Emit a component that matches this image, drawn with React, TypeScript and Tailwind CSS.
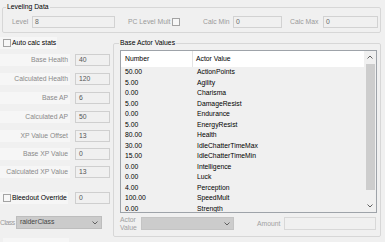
import React from "react";

const ROWS = [
  ["50.00", "ActionPoints"],
  ["5.00", "Agility"],
  ["0.00", "Charisma"],
  ["5.00", "DamageResist"],
  ["0.00", "Endurance"],
  ["5.00", "EnergyResist"],
  ["80.00", "Health"],
  ["30.00", "IdleChatterTimeMax"],
  ["15.00", "IdleChatterTimeMin"],
  ["0.00", "Intelligence"],
  ["0.00", "Luck"],
  ["4.00", "Perception"],
  ["100.00", "SpeedMult"],
  ["0.00", "Strength"],
];

function Check() {
  return <div className="w-[8px] h-[8px] border border-[#a3a3a3] bg-[#f7f7f7] shrink-0" />;
}

function Chevron({ up }: { up?: boolean }) {
  return (
    <svg width="6" height="4" viewBox="0 0 6 4" className="text-[#606060]">
      <path d={up ? "M0.5 3.5L3 1L5.5 3.5" : "M0.5 0.5L3 3L5.5 0.5"} fill="none" stroke="currentColor" strokeWidth="1" />
    </svg>
  );
}

function Field({ label, value, mt }: { label: string; value: string; mt: string }) {
  return (
    <div className={`flex h-[12px] ${mt}`}>
      <div className="w-[70px] h-full bg-[#f6f6f6] pr-[2px] text-right leading-[12px] text-[#8a8a8a] whitespace-nowrap">
        {label}
      </div>
      <div className="ml-[5px] w-[35px] h-full border border-[#cfcfcf] bg-[#f0f0f0] pl-[3px] leading-[10px] text-[#555]">
        {value}
      </div>
    </div>
  );
}

function SmallInput({ w, value }: { w: string; value?: string }) {
  return (
    <div className={`${w} h-[12px] border border-[#d2d2d2] bg-[#f0f0f0] pl-[2px] leading-[10px] text-[#666]`}>{value}</div>
  );
}

export default function App() {
  return (
    <div className="w-[385px] h-[242px] overflow-hidden bg-[#f0f0f0] font-['Liberation_Sans',Arial,sans-serif] text-[6.8px] text-black">
      {/* Leveling Data */}
      <fieldset className="ml-[2px] mr-[4px] mt-[2px] h-[31px] border border-[#d7d7d7] rounded-[2px] pl-[9px]">
        <legend className="ml-[-6px] px-[1px] leading-[10px]">Leveling Data</legend>
        <div className="flex items-center mt-[4px] h-[12px] text-[#9a9a9a]">
          <div className="w-[18px] whitespace-nowrap">Level</div>
          <div className="ml-[2px]">
            <SmallInput w="w-[83px]" value="8" />
          </div>
          <div className="ml-[13px] w-[42px] whitespace-nowrap">PC Level Mult</div>
          <div className="ml-[2px]">
            <Check />
          </div>
          <div className="ml-[23px] w-[28px] whitespace-nowrap">Calc Min</div>
          <div className="ml-[2px]">
            <SmallInput w="w-[49px]" value="0" />
          </div>
          <div className="ml-[8px] w-[32px] whitespace-nowrap">Calc Max</div>
          <div className="ml-[1px]">
            <SmallInput w="w-[55px]" value="0" />
          </div>
        </div>
      </fieldset>

      <div className="flex">
        {/* left column */}
        <div className="w-[113px] shrink-0 flex flex-col">
          <div className="mt-[4px] w-[57px] h-[12px] bg-[#f6f6f6] flex items-center pl-[3px] gap-[1px]">
            <Check />
            <span className="whitespace-nowrap">Auto calc stats</span>
          </div>
          <Field label="Base Health" value="40" mt="mt-[5px]" />
          <Field label="Calculated Health" value="120" mt="mt-[7px]" />
          <Field label="Base AP" value="6" mt="mt-[7px]" />
          <Field label="Calculated AP" value="50" mt="mt-[7px]" />
          <Field label="XP Value Offset" value="13" mt="mt-[7px]" />
          <Field label="Base XP Value" value="0" mt="mt-[6px]" />
          <Field label="Calculated XP Value" value="13" mt="mt-[6px]" />
          <div className="flex h-[12px] mt-[14px]">
            <div className="w-[68px] h-full bg-[#f6f6f6] flex items-center pl-[3px] gap-[1px]">
              <Check />
              <span className="whitespace-nowrap">Bleedout Override</span>
            </div>
            <div className="ml-[7px] w-[35px] h-full border border-[#cfcfcf] bg-[#f0f0f0] pl-[3px] leading-[10px] text-[#555]">
              0
            </div>
          </div>
          <div className="flex h-[13px] mt-[12px]">
            <div className="w-[15px] leading-[13px] text-[#9a9a9a] whitespace-nowrap tracking-[-0.45px]">Class</div>
            <div className="ml-[1px] w-[86px] h-full border border-[#bdbdbd] bg-[#cbcbcb] flex items-center justify-between pl-[3px] pr-[3px] text-[#444]">
              <span>raiderClass</span>
              <Chevron />
            </div>
          </div>
          <div className="mt-[9px] ml-[3px] w-[66px] h-[10px] bg-[#f6f6f6]" />
        </div>

        {/* Base Actor Values */}
        <fieldset className="mt-[5px] w-[268px] h-[199px] border border-[#d7d7d7] rounded-[2px] pl-[6px]">
          <legend className="ml-[-1px] px-[1px] leading-[10px]">Base Actor Values</legend>
          <div className="mt-[2px] w-[257px] h-[163px] border border-[#9ea3a9] flex overflow-hidden">
            <div className="flex-1 flex flex-col">
              <div className="h-[16px] bg-white flex shrink-0">
                <div className="w-[72px] pl-[4px] leading-[16px] border-r border-[#e3e3e3]">Number</div>
                <div className="pl-[3px] leading-[16px]">Actor Value</div>
              </div>
              <div className="flex flex-col">
                {ROWS.map(([num, name]) => (
                  <div key={name} className="flex h-[10.5px] leading-[10.5px] shrink-0 whitespace-nowrap">
                    <div className="w-[72px] pl-[4px]">{num}</div>
                    <div className="pl-[4px]">{name}</div>
                  </div>
                ))}
              </div>
            </div>
            <div className="w-[12px] flex flex-col items-center bg-[#f0f0f0]">
              <div className="h-[12px] flex items-center justify-center">
                <Chevron up />
              </div>
              <div className="mt-[1px] w-[9px] h-[126px] bg-[#cdcdcd]" />
              <div className="flex-1" />
              <div className="h-[12px] flex items-center justify-center">
                <Chevron />
              </div>
            </div>
          </div>
          <div className="flex items-start mt-[2px]">
            <div className="w-[21px] leading-[8px] text-[#a0a0a0] pt-[1px]">
              Actor
              <br />
              Value
            </div>
            <div className="mt-[2px] w-[93px] h-[13px] border border-[#c4c4c4] bg-[#cccccc] flex items-center justify-end pr-[3px]">
              <Chevron />
            </div>
            <div className="ml-[23px] mt-[2px] leading-[13px] text-[#a0a0a0]">Amount</div>
            <div className="ml-[4px] mt-[2px] w-[92px] h-[13px] border border-[#d8d8d8] bg-[#f0f0f0]" />
          </div>
        </fieldset>
      </div>
    </div>
  );
}
